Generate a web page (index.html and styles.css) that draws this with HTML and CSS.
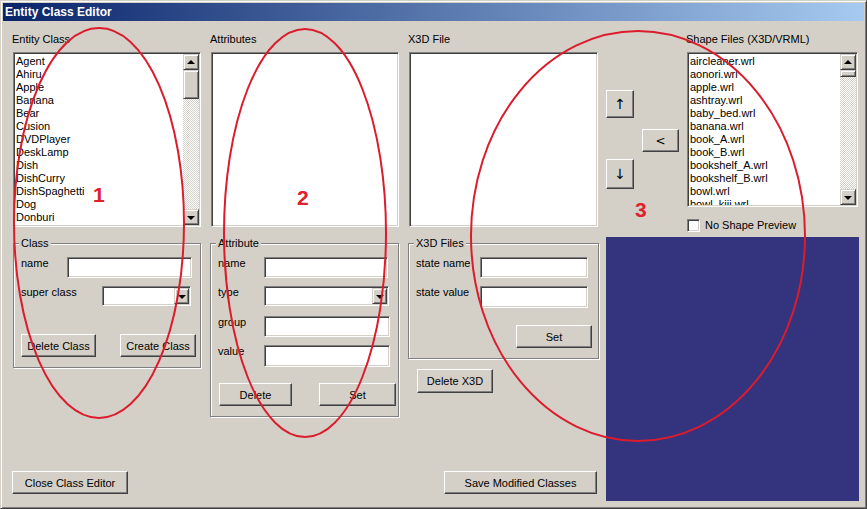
FILE: index.html
```html
<!DOCTYPE html>
<html>
<head>
<meta charset="utf-8">
<title>Entity Class Editor</title>
<link rel="stylesheet" href="styles.css">
</head>
<body>
<div class="window">
  <div class="titlebar">Entity Class Editor</div>
  <div class="client">
    <!-- column 1 -->
    <div class="cell c1 r1">
      <div class="label">Entity Class</div>
      <div class="listbox lb-main">
        <div class="items">
          <div>Agent</div><div>Ahiru</div><div>Apple</div><div>Banana</div><div>Bear</div>
          <div>Cusion</div><div>DVDPlayer</div><div>DeskLamp</div><div>Dish</div><div>DishCurry</div>
          <div>DishSpaghetti</div><div>Dog</div><div>Donburi</div>
        </div>
        <div class="scrollbar">
          <div class="sb-btn"><span class="tri-up"></span></div>
          <div class="sb-thumb th-main"></div>
          <div class="sb-track"></div>
          <div class="sb-btn"><span class="tri-down"></span></div>
        </div>
      </div>
    </div>
    <div class="cell c1 r2">
      <div class="group g-class">
        <div class="legend">Class</div>
        <div class="row mt7"><span class="rl w46">name</span><div class="edit w125 h21"></div></div>
        <div class="row mt8"><span class="rl w81">super class</span><div class="combo w89"><div class="cb-btn"><span class="tri-down"></span></div></div></div>
        <div class="row mt28"><button class="btn w75">Delete Class</button><button class="btn w76 ml24">Create Class</button></div>
      </div>
    </div>
    <div class="cell c1 r3">
      <button class="btn w116">Close Class Editor</button>
    </div>

    <!-- column 2 -->
    <div class="cell c2 r1">
      <div class="label">Attributes</div>
      <div class="listbox lb-attr"></div>
    </div>
    <div class="cell c2 r2">
      <div class="group g-attr">
        <div class="legend">Attribute</div>
        <div class="row mt7"><span class="rl w46">name</span><div class="edit w124 h21"></div></div>
        <div class="row mt8"><span class="rl w46">type</span><div class="combo w125"><div class="cb-btn"><span class="tri-down"></span></div></div></div>
        <div class="row mt10"><span class="rl w46">group</span><div class="edit w126 h21"></div></div>
        <div class="row mt8"><span class="rl w46">value</span><div class="edit w126 h22"></div></div>
        <div class="row mt16"><button class="btn w73 ml1">Delete</button><button class="btn w77 ml27">Set</button></div>
      </div>
    </div>

    <!-- column 3 -->
    <div class="cell c3 r1">
      <div class="label">X3D File</div>
      <div class="listbox lb-x3d"></div>
    </div>
    <div class="cell c3 r2">
      <div class="group g-x3d">
        <div class="legend">X3D Files</div>
        <div class="row mt7"><span class="rl w64">state name</span><div class="edit w108 h21"></div></div>
        <div class="row mt8"><span class="rl w64">state value</span><div class="edit w108 h22"></div></div>
        <div class="row mt17"><button class="btn w76 ml100">Set</button></div>
      </div>
      <button class="btn w76 btn-delx3d">Delete X3D</button>
    </div>
    <div class="cell c3 r3">
      <button class="btn w153 ml36">Save Modified Classes</button>
    </div>

    <!-- column 4 -->
    <div class="cell c4 r1">
      <div class="arrows">
        <button class="btn abtn a-up">↑</button>
        <button class="btn abtn a-left">&lt;</button>
        <button class="btn abtn a-down">↓</button>
      </div>
      <div class="shapecol">
        <div class="label shape-label">Shape Files (X3D/VRML)</div>
        <div class="listbox lb-shape">
          <div class="items items-shape">
            <div>aircleaner.wrl</div><div>aonori.wrl</div><div>apple.wrl</div><div>ashtray.wrl</div>
            <div>baby_bed.wrl</div><div>banana.wrl</div><div>book_A.wrl</div><div>book_B.wrl</div>
            <div>bookshelf_A.wrl</div><div>bookshelf_B.wrl</div><div>bowl.wrl</div><div>bowl_kiji.wrl</div>
          </div>
          <div class="scrollbar">
            <div class="sb-btn"><span class="tri-up"></span></div>
            <div class="sb-thumb th-shape"></div>
            <div class="sb-track"></div>
            <div class="sb-btn"><span class="tri-down"></span></div>
          </div>
        </div>
        <div class="checkrow"><span class="checkbox"></span><span>No Shape Preview</span></div>
      </div>
    </div>
    <div class="cell c4 r23">
      <div class="preview"></div>
    </div>
  </div>

  <svg class="annot" width="867" height="509" viewBox="0 0 867 509">
    <ellipse cx="98" cy="222" rx="85" ry="195"/>
    <ellipse cx="304" cy="232" rx="81" ry="204"/>
    <ellipse cx="637" cy="235" rx="167" ry="205"/>
    <text x="92" y="201">1</text>
    <text x="296" y="204">2</text>
    <text x="634" y="216">3</text>
  </svg>
</div>
</body>
</html>
```

FILE: styles.css
```css
* { box-sizing: border-box; }
html, body { margin: 0; padding: 0; }
body {
  width: 867px;
  height: 509px;
  overflow: hidden;
  background: #d4d0c8;
  font-family: "Liberation Sans", Arial, sans-serif;
  font-size: 11px;
  color: #000;
}
.window {
  position: relative;
  width: 867px;
  height: 509px;
  background: #d4d0c8;
  border: 1px solid;
  border-color: #d4d0c8 #404040 #404040 #d4d0c8;
  box-shadow: inset 1px 1px #fff, inset -1px -1px #808080;
  padding: 2px;
  display: flex;
  flex-direction: column;
}
.titlebar {
  height: 18px;
  flex: none;
  background: linear-gradient(to right, #0a246a, #a6caf0);
  color: #fff;
  font-weight: bold;
  font-size: 12px;
  line-height: 18px;
  padding-left: 2px;
  white-space: nowrap;
}
.client {
  flex: 1;
  display: grid;
  grid-template-columns: 198px 198px 198px 252px;
  grid-template-rows: 204px 234px 23px;
  padding: 12px 0 0 9px;
}
.c1 { grid-column: 1; }
.c2 { grid-column: 2; }
.c3 { grid-column: 3; }
.c4 { grid-column: 4; }
.r1 { grid-row: 1; }
.r2 { grid-row: 2; }
.r3 { grid-row: 3; }
.r23 { grid-row: 2 / 4; }
.cell { min-width: 0; }

.label { height: 13px; line-height: 13px; white-space: nowrap; }

/* list boxes */
.listbox {
  margin-top: 6px;
  height: 175px;
  width: 188px;
  background: #fff;
  border: 1px solid;
  border-color: #808080 #fff #fff #808080;
  box-shadow: inset 1px 1px #404040, inset -1px -1px #d4d0c8;
  padding: 1px;
  display: flex;
  overflow: hidden;
}
.lb-main { margin-left: 1px; }
.lb-attr { margin-left: 1px; }
.lb-x3d { margin-left: 1px; width: 189px; }
.items {
  flex: 1;
  padding: 1px 0 0 1px;
  line-height: 13px;
  white-space: nowrap;
  overflow: hidden;
}
.items-shape { padding-left: 1px; }
.scrollbar {
  width: 16px;
  flex: none;
  display: flex;
  flex-direction: column;
}
.sb-btn, .cb-btn {
  flex: none;
  height: 16px;
  background: #d4d0c8;
  border: 1px solid;
  border-color: #d4d0c8 #404040 #404040 #d4d0c8;
  box-shadow: inset 1px 1px #fff, inset -1px -1px #808080;
  display: flex;
  align-items: center;
  justify-content: center;
}
.sb-thumb {
  flex: none;
  background: #d4d0c8;
  border: 1px solid;
  border-color: #d4d0c8 #404040 #404040 #d4d0c8;
  box-shadow: inset 1px 1px #fff, inset -1px -1px #808080;
}
.th-main { height: 29px; }
.th-shape { height: 7px; }
.sb-track {
  flex: 1;
  background: repeating-conic-gradient(#fff 0 25%, #d4d0c8 0 50%) 0 0 / 2px 2px;
}
.tri-up, .tri-down {
  width: 0;
  height: 0;
  border-left: 4px solid transparent;
  border-right: 4px solid transparent;
}
.tri-up { border-bottom: 4px solid #000; margin-top: -1px; }
.tri-down { border-top: 4px solid #000; margin-top: 1px; }

/* group boxes */
.group {
  border: 1px solid #808080;
  box-shadow: inset 1px 1px #fff, 1px 1px #fff;
  padding: 0 0 0 7px;
}
.g-class { margin-top: 6px; margin-left: 1px; width: 188px; height: 125px; }
.g-attr { margin-top: 6px; width: 189px; height: 174px; }
.g-x3d { margin-top: 6px; width: 191px; height: 116px; }
.legend {
  margin-top: -7px;
  margin-left: -2px;
  height: 13px;
  line-height: 13px;
  padding: 0 2px;
  background: #d4d0c8;
  width: fit-content;
}
.row { display: flex; align-items: flex-start; }
.rl { flex: none; line-height: 13px; white-space: nowrap; }
.w46 { width: 46px; }
.w64 { width: 64px; }
.w81 { width: 81px; }
.mt7 { margin-top: 7px; }
.mt8 { margin-top: 8px; }
.mt10 { margin-top: 10px; }
.mt16 { margin-top: 16px; }
.mt17 { margin-top: 17px; }
.mt28 { margin-top: 28px; }

.edit, .combo {
  flex: none;
  background: #fff;
  border: 1px solid;
  border-color: #808080 #fff #fff #808080;
  box-shadow: inset 1px 1px #404040, inset -1px -1px #d4d0c8;
}
.h21 { height: 21px; }
.h22 { height: 22px; }
.combo {
  height: 20px;
  padding: 1px;
  display: flex;
  justify-content: flex-end;
}
.cb-btn { width: 15px; height: 16px; }
.w73 { width: 73px; }
.w75 { width: 75px; }
.w76 { width: 76px; }
.w77 { width: 77px; }
.w89 { width: 89px; }
.w108 { width: 108px; }
.w116 { width: 116px; }
.w124 { width: 124px; }
.w125 { width: 125px; }
.w126 { width: 126px; }
.w153 { width: 153px; }

/* buttons */
.btn {
  flex: none;
  display: block;
  height: 23px;
  padding: 0;
  margin: 0;
  font-family: inherit;
  font-size: 11px;
  color: #000;
  background: #d4d0c8;
  border: 1px solid;
  border-color: #fff #404040 #404040 #fff;
  box-shadow: inset -1px -1px #808080;
  text-align: center;
  line-height: 20px;
  white-space: nowrap;
}
.row .btn.ml24 { margin-left: 24px; }
.row .btn.ml27 { margin-left: 27px; }
.row .btn.ml100 { margin-left: 100px; }
.row .btn.ml1 { margin-left: 1px; }
.btn.ml36 { margin-left: 36px; }
.btn-delx3d { margin-top: 10px; margin-left: 9px; height: 24px; }

/* column 4 */
.c4.r1 { display: flex; }
.arrows {
  width: 81px;
  flex: none;
  display: flex;
  flex-direction: column;
  align-items: flex-start;
}
.abtn { font-family: "DejaVu Sans", "Liberation Sans", sans-serif; }
.a-up, .a-down { font-size: 14px; }
.a-left { font-size: 12px; }
.a-up { margin-top: 57px; width: 28px; height: 28px; line-height: 25px; }
.a-left { margin-top: 11px; margin-left: 36px; width: 37px; height: 23px; }
.a-down { margin-top: 7px; width: 28px; height: 30px; line-height: 27px; }
.shapecol { flex: 1; }
.shape-label { margin-left: -1px; }
.lb-shape { width: 171px; height: 155px; }
.checkrow {
  margin-top: 12px;
  display: flex;
  align-items: center;
  height: 13px;
  line-height: 13px;
  white-space: nowrap;
}
.checkbox {
  width: 13px;
  height: 13px;
  margin-right: 5px;
  background: #fff;
  border: 1px solid;
  border-color: #808080 #fff #fff #808080;
  box-shadow: inset 1px 1px #404040, inset -1px -1px #d4d0c8;
}
.preview {
  width: 253px;
  height: 264px;
  background: #33337e;
}

/* annotation overlay */
.annot {
  position: absolute;
  left: 0;
  top: 0;
  pointer-events: none;
}
.annot ellipse {
  fill: none;
  stroke: #dc1c2c;
  stroke-width: 2;
}
.annot text {
  font-family: "Liberation Sans", Arial, sans-serif;
  font-size: 21px;
  font-weight: bold;
  fill: #e0202e;
}
```
